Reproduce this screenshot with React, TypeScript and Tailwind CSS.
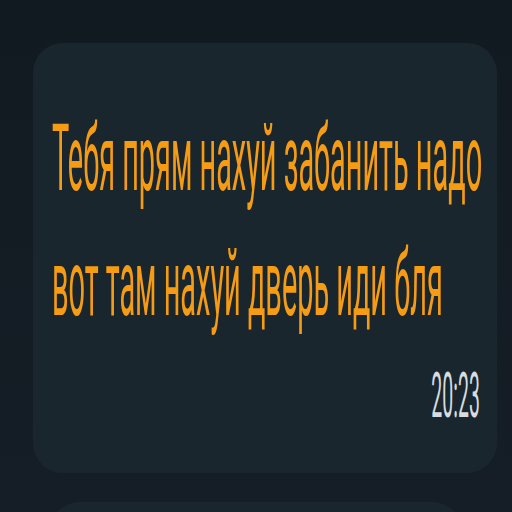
export default function App() {
  return (
    <div className="w-[512px] h-[512px] overflow-hidden bg-gradient-to-b from-[#121a21] to-[#151e26] font-['Roboto',sans-serif]">
      <div className="pt-[43px] pl-[33px]">
        <div className="w-[464px] h-[430px] rounded-[30px] bg-[#1a262e] overflow-hidden pt-[53px] pl-[19px] pr-[17px]">
          <div className="whitespace-nowrap text-[92px] leading-[125px] text-[#f59c14] origin-left scale-x-[0.314]">
            Тебя прям нахуй забанить надо
          </div>
          <div className="whitespace-nowrap text-[92px] leading-[125px] text-[#f59c14] origin-left scale-x-[0.314]">
            вот там нахуй дверь иди бля
          </div>
          <div className="mt-[18px] flex justify-end">
            <span className="whitespace-nowrap text-[63px] leading-[63px] text-[#d6dcdf] origin-right scale-x-[0.31]">
              20:23
            </span>
          </div>
        </div>
      </div>
      <div className="mt-[29px] mx-[50px] h-[60px] rounded-t-[30px] bg-[#1a262e]" />
    </div>
  );
}
